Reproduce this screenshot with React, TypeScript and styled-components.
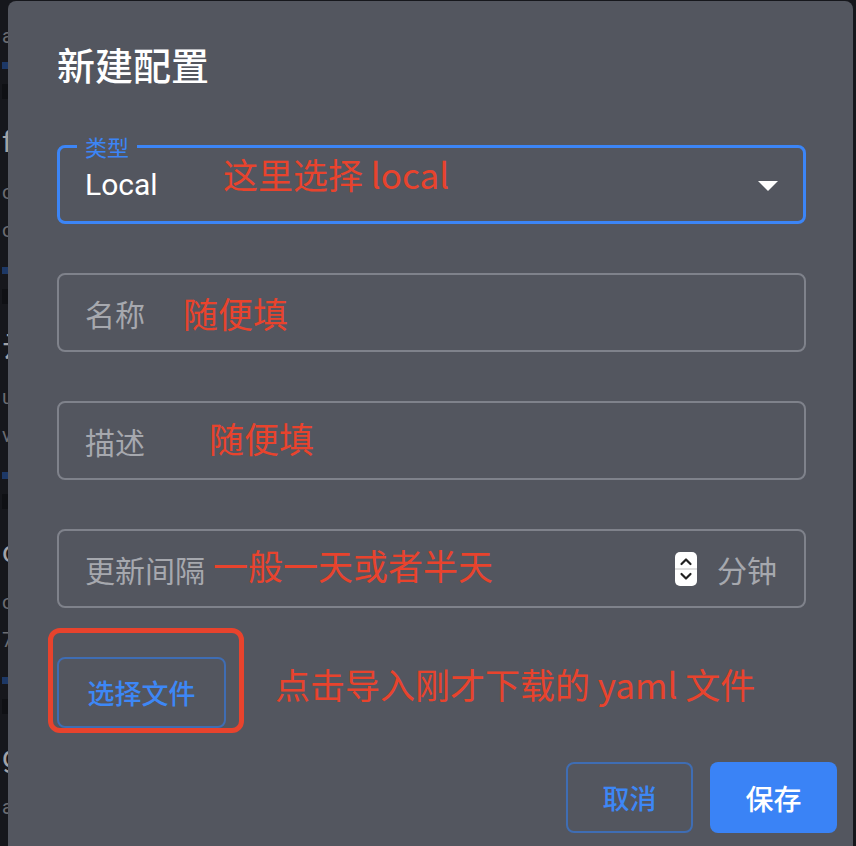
import React from "react";
import styled, { createGlobalStyle } from "styled-components";

const GlobalStyle = createGlobalStyle`
  html, body { margin: 0; padding: 0; }
  body {
    background: #16171c;
    overflow: hidden;
    font-family: Roboto, "Noto Sans CJK SC", sans-serif;
  }
  #root { width: 856px; height: 846px; }
`;

const Page = styled.div`
  position: relative;
  width: 856px;
  height: 846px;
  overflow: hidden;
  background: #16171c;
`;

/* ---------- page behind the dialog ---------- */
const BgList = styled.div`
  display: flex;
  flex-direction: column;
  padding-left: 2px;
`;

const BgLine = styled.div<{ $mt?: number }>`
  margin-top: ${(p) => p.$mt ?? 0}px;
  font-size: 20px;
  line-height: 36px;
  color: #6b6c72;
  white-space: nowrap;
`;

const BgTitle = styled.div`
  margin-top: 21px;
  font-size: 30px;
  line-height: 44px;
  color: #a2a3a8;
  white-space: nowrap;
`;

const BgBar = styled.div<{ $mt: number }>`
  margin-top: ${(p) => p.$mt}px;
  height: 7px;
  width: 200px;
  background: #1d3866;
`;

const BgBand = styled.div`
  height: 15px;
  width: 200px;
  background: #0f1014;
`;

const BgCard = styled.div`
  display: flex;
  flex-direction: column;
  padding-bottom: 15px;
`;

/* ---------- dialog ---------- */
const Dialog = styled.div`
  position: absolute;
  left: 8px;
  top: 1px;
  width: 845px;
  height: 880px;
  box-sizing: border-box;
  background: #53565f;
  border-radius: 8px;
  padding: 41px 16px 0 49px;
  display: flex;
  flex-direction: column;
  font-family: Roboto, "Noto Sans CJK SC", sans-serif;
`;

const Title = styled.h2`
  margin: 0;
  font-family: "Noto Sans CJK SC", sans-serif;
  font-size: 38px;
  line-height: 44px;
  font-weight: 500;
  color: #ffffff;
`;

const Form = styled.div`
  margin-top: 59px;
  width: 749px;
  display: flex;
  flex-direction: column;
  gap: 49px;
`;

const SelectBox = styled.div`
  position: relative;
  box-sizing: border-box;
  height: 79px;
  border: 3px solid #3c85f6;
  border-radius: 8px;
  display: flex;
  align-items: center;
  justify-content: space-between;
  padding: 0 25px;
`;

const Legend = styled.span`
  position: absolute;
  left: 17px;
  top: -15px;
  padding: 0 8px;
  background: #53565f;
  font-family: "Noto Sans CJK SC", sans-serif;
  font-size: 22px;
  line-height: 26px;
  color: #3c85f6;
`;

const Value = styled.span`
  font-size: 30px;
  color: #ffffff;
`;

const Caret = styled.span`
  width: 0;
  height: 0;
  border-left: 10px solid transparent;
  border-right: 10px solid transparent;
  border-top: 10px solid #ffffff;
  margin-top: 2px;
`;

const Field = styled.div`
  position: relative;
  box-sizing: border-box;
  height: 79px;
  border: 2px solid #7f828b;
  border-radius: 8px;
  display: flex;
  align-items: center;
  justify-content: space-between;
  padding: 0 27px 0 26px;
`;

const Placeholder = styled.span`
  font-family: "Noto Sans CJK SC", sans-serif;
  font-size: 30px;
  color: #a6a8ae;
`;

const Adornment = styled.div`
  display: flex;
  align-items: center;
  gap: 20px;
`;

const Note = styled.span<{ $left: number; $top: number }>`
  position: absolute;
  left: ${(p) => p.$left}px;
  top: ${(p) => p.$top}px;
  font-family: "Noto Sans CJK SC", sans-serif;
  font-size: 35px;
  line-height: 40px;
  color: #e8432d;
  white-space: pre;
  pointer-events: none;
`;

const FileRow = styled.div`
  position: relative;
  margin-top: 49px;
  display: flex;
`;

const OutlineButton = styled.button<{ $w: number }>`
  box-sizing: border-box;
  width: ${(p) => p.$w}px;
  height: 71px;
  background: transparent;
  border: 2px solid #3f6db3;
  border-radius: 8px;
  font-family: "Noto Sans CJK SC", sans-serif;
  font-size: 27px;
  font-weight: 500;
  color: #3d87f6;
  padding: 0;
`;

const FilledButton = styled.button`
  box-sizing: border-box;
  width: 127px;
  height: 71px;
  background: #3a83f6;
  border: none;
  border-radius: 8px;
  font-family: "Noto Sans CJK SC", sans-serif;
  font-size: 28px;
  font-weight: 500;
  color: #ffffff;
  padding: 0;
`;

const RedFrame = styled.div`
  position: absolute;
  left: -9px;
  top: -29px;
  width: 196px;
  height: 105px;
  box-sizing: border-box;
  border: 5px solid #e8432d;
  border-radius: 12px;
  pointer-events: none;
`;

const Actions = styled.div`
  margin-top: 34px;
  display: flex;
  justify-content: flex-end;
  gap: 17px;
`;

const Spinner = () => (
  <svg width="22" height="34" viewBox="0 0 22 34">
    <rect x="0" y="0" width="22" height="34" rx="5" fill="#ffffff" />
    <line x1="0" y1="17" x2="22" y2="17" stroke="#d6d6d6" strokeWidth="1.5" />
    <polyline points="6.5,12 11,7.5 15.5,12" fill="none" stroke="#222" strokeWidth="2.2" strokeLinecap="round" strokeLinejoin="round" />
    <polyline points="6.5,22 11,26.5 15.5,22" fill="none" stroke="#222" strokeWidth="2.2" strokeLinecap="round" strokeLinejoin="round" />
  </svg>
);

const cards = [
  { title: "fly", l1: "o", l2: "oc" },
  { title: "云端", l1: "u", l2: "v" },
  { title: "ok", l1: "o.", l2: "77" },
  { title: "gg", l1: "aa", l2: "" },
];

export default function App() {
  return (
    <>
      <GlobalStyle />
      <Page>
        <BgList>
          <BgLine $mt={18}>aa</BgLine>
          <BgBar $mt={8} />
          <BgCard style={{ marginTop: 15 }}>
            {cards.map((c) => (
              <React.Fragment key={c.title}>
                <BgBand />
                <BgTitle>{c.title}</BgTitle>
                <BgLine $mt={10}>{c.l1}</BgLine>
                {c.l2 && (
                  <>
                    <BgLine $mt={2}>{c.l2}</BgLine>
                    <BgBar $mt={19} />
                  </>
                )}
                <div style={{ height: 15 }} />
              </React.Fragment>
            ))}
          </BgCard>
        </BgList>

        <Dialog>
          <Title>新建配置</Title>
          <Form>
            <SelectBox>
              <Legend>类型</Legend>
              <Value>Local</Value>
              <Caret />
              <Note $left={163} $top={6}>这里选择 local</Note>
            </SelectBox>
            <Field>
              <Placeholder>名称</Placeholder>
              <Note $left={124} $top={18}>随便填</Note>
            </Field>
            <Field>
              <Placeholder>描述</Placeholder>
              <Note $left={150} $top={15}>随便填</Note>
            </Field>
            <Field>
              <Placeholder>更新间隔</Placeholder>
              <Adornment>
                <Spinner />
                <Placeholder>分钟</Placeholder>
              </Adornment>
              <Note $left={154} $top={14}>一般一天或者半天</Note>
            </Field>
          </Form>
          <FileRow>
            <OutlineButton $w={169}>选择文件</OutlineButton>
            <RedFrame />
            <Note $left={218} $top={7}>点击导入刚才下载的 yaml 文件</Note>
          </FileRow>
          <Actions>
            <OutlineButton $w={127}>取消</OutlineButton>
            <FilledButton>保存</FilledButton>
          </Actions>
        </Dialog>
      </Page>
    </>
  );
}
